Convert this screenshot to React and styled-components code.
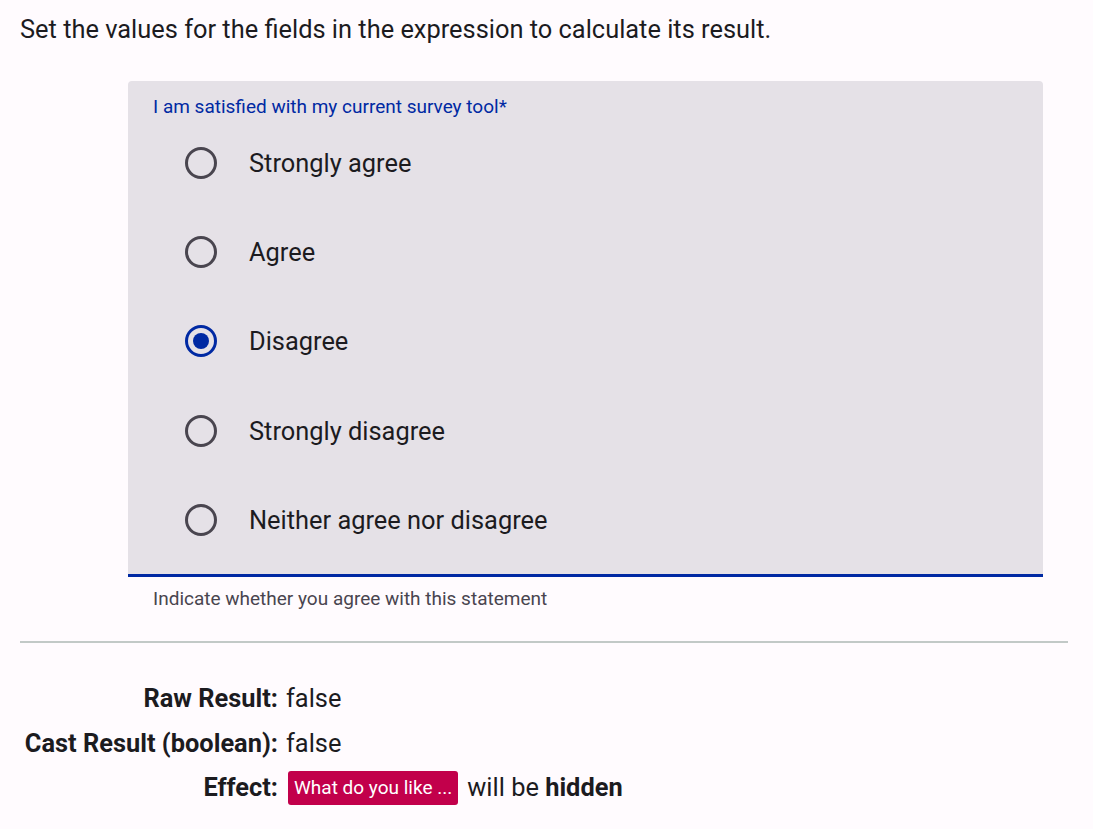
import React from "react";
import styled, { createGlobalStyle } from "styled-components";

const GlobalStyle = createGlobalStyle`
  html, body {
    margin: 0;
    padding: 0;
    background: #fffbfe;
  }
  body {
    font-family: Roboto, "Noto Sans", sans-serif;
    color: #1c1b1f;
  }
`;

const Page = styled.div`
  width: 1048px;
  padding: 0 20px;
`;

const Intro = styled.p`
  margin: 0;
  padding-top: 14px;
  font-size: 25.4px;
  line-height: 30px;
`;

const Card = styled.div`
  margin: 37px 25px 0 108px;
  background: #e5e1e7;
  border-radius: 4px 4px 0 0;
  border-bottom: 3px solid #0029a3;
  padding: 15px 24px 10px 25px;
`;

const Question = styled.div`
  font-size: 19px;
  line-height: 22px;
  color: #0029a3;
`;

const Options = styled.div`
  display: flex;
  flex-direction: column;
`;

const Option = styled.label`
  display: flex;
  align-items: center;
  gap: 32px;
  height: 89.3px;
  padding-left: 32px;
  font-size: 25.4px;
  cursor: pointer;
`;

const Radio = styled.span`
  box-sizing: border-box;
  width: 32px;
  height: 32px;
  border-radius: 50%;
  border: 3px solid ${(p) => (p.checked ? "#0029a3" : "#49454f")};
  display: flex;
  align-items: center;
  justify-content: center;
  flex-shrink: 0;
  &::after {
    content: "";
    display: ${(p) => (p.checked ? "block" : "none")};
    width: 16px;
    height: 16px;
    border-radius: 50%;
    background: #0029a3;
  }
`;

const Helper = styled.div`
  margin: 11px 0 0 133px;
  font-size: 19px;
  line-height: 22px;
  color: #49454f;
`;

const Divider = styled.hr`
  margin: 31px 0 0;
  border: 0;
  height: 2px;
  background: #c2c9c7;
`;

const Results = styled.div`
  display: grid;
  grid-template-columns: 258px auto;
  column-gap: 8px;
  margin-top: 33px;
  font-size: 25.4px;
`;

const Label = styled.div`
  font-weight: 700;
  text-align: right;
  line-height: 44.5px;
`;

const Value = styled.div`
  display: flex;
  align-items: center;
  line-height: 44.5px;
  gap: 9px;
`;

const Chip = styled.span`
  background: #c2004b;
  color: #fff;
  font-size: 19px;
  line-height: 34px;
  padding: 0 6px;
  border-radius: 3px;
  margin-left: 2px;
`;

const options = [
  "Strongly agree",
  "Agree",
  "Disagree",
  "Strongly disagree",
  "Neither agree nor disagree",
];

export default function App() {
  const [selected, setSelected] = React.useState("Disagree");
  return (
    <>
      <GlobalStyle />
      <Page>
        <Intro>
          Set the values for the fields in the expression to calculate its
          result.
        </Intro>
        <Card>
          <Question>I am satisfied with my current survey tool*</Question>
          <Options>
            {options.map((o) => (
              <Option key={o} onClick={() => setSelected(o)}>
                <Radio checked={selected === o} />
                {o}
              </Option>
            ))}
          </Options>
        </Card>
        <Helper>Indicate whether you agree with this statement</Helper>
        <Divider />
        <Results>
          <Label>Raw Result:</Label>
          <Value>false</Value>
          <Label>Cast Result (boolean):</Label>
          <Value>false</Value>
          <Label>Effect:</Label>
          <Value>
            <Chip>What do you like ...</Chip>
            <span>
              will be <b>hidden</b>
            </span>
          </Value>
        </Results>
      </Page>
    </>
  );
}
